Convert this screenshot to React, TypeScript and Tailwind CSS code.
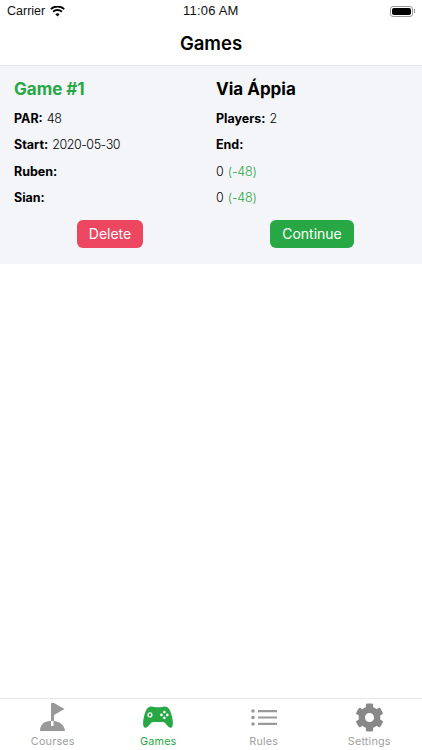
import React from "react";
import { FaCog } from "react-icons/fa";
import { IoLogoGameControllerB } from "react-icons/io";

const font = "font-['Inter','Liberation_Sans',sans-serif]";

function Row({ label, value }: { label: string; value?: string }) {
  return (
    <div className="h-[26.4px] flex items-center text-[12.5px] text-black">
      <span className="font-bold">{label}</span>
      {value && <span className="ml-1 font-light tracking-[-0.45px]">{value}</span>}
    </div>
  );
}

function Score() {
  return (
    <div className="h-[26.4px] flex items-center text-[12.5px] font-light text-black">
      <span>0</span>
      <span className="ml-1 text-[#28a745] tracking-[-0.2px]">(-48)</span>
    </div>
  );
}

function Flag() {
  return (
    <svg width="25" height="28" viewBox="0 0 25 28" aria-hidden="true">
      <path d="M11 0h3v18h-3z" fill="#999" />
      <path d="M14 0l10.500 6L14 12z" fill="#999" />
      <path d="M0 28c0-5 3-9 8-9.700 1-.2 2-.3 3-.3v5h2.500v-5c6.500.3 11 4.500 11.500 10z" fill="#999" />
    </svg>
  );
}

function ListIcon() {
  return (
    <svg width="26" height="17" viewBox="0 0 26 17" aria-hidden="true">
      <circle cx="2" cy="2" r="1.800" fill="#999" />
      <circle cx="2" cy="8.500" r="1.800" fill="#999" />
      <circle cx="2" cy="15" r="1.800" fill="#999" />
      <path d="M7 1h19v2.200H7zM7 7.400h19v2.200H7zM7 13.800h19V16H7z" fill="#999" />
    </svg>
  );
}

function Tab({ label, active, children }: { label: string; active?: boolean; children: React.ReactNode }) {
  return (
    <div className="flex flex-col items-center">
      <div className="h-[30px] flex items-center justify-center">{children}</div>
      <span className={`mt-[3px] text-[10.8px] leading-[14px] tracking-[0.2px] ${active ? "text-[#28a745]" : "text-[#a0a0a0]"}`}>{label}</span>
    </div>
  );
}

export default function App() {
  return (
    <div className={`${font} w-[422px] h-[750px] bg-white flex flex-col overflow-hidden`}>
      <div className="h-[22px] px-[7px] flex items-center justify-between relative text-[12.5px] text-[#111]">
        <div className="flex items-center gap-[5px] font-['Liberation_Sans',sans-serif]">
          <span>Carrier</span>
          <svg width="15" height="11" viewBox="0 0 16 12" aria-hidden="true">
            <path d="M8 11.500 5.700 8.900a3.400 3.400 0 0 1 4.600 0zM3.900 7 2.500 5.400a8.200 8.200 0 0 1 11 0L12.100 7a6 6 0 0 0-8.200 0zM1.500 4.200 0 2.600a11.800 11.800 0 0 1 16 0l-1.500 1.600a9.700 9.700 0 0 0-13 0z" fill="#000" />
          </svg>
        </div>
        <span className="absolute left-[183px] font-['Liberation_Sans',sans-serif] text-[13px] font-medium tracking-[0.2px]">11:06 AM</span>
        <div className="flex items-center">
          <div className="w-[23px] h-[11px] rounded-[3px] border border-[#999] p-[1px]">
            <div className="w-full h-full rounded-[2px] bg-black" />
          </div>
          <div className="w-[1px] h-[4px] bg-[#999] ml-[1px]" />
        </div>
      </div>

      <div className="h-[43px] flex items-center justify-center border-b border-[#e6e7eb] box-content">
        <h1 className="text-[18.5px] font-semibold text-black">Games</h1>
      </div>

      <div className="bg-[#f4f5f9] h-[198px] px-[14px] pt-[11px]">
        <div className="grid grid-cols-2 gap-x-[10px]">
          <div>
            <div className="h-[26px] flex items-center text-[17px] font-bold text-[#28a745]">Game #1</div>
            <div className="h-[3px]" />
            <Row label="PAR:" value="48" />
            <Row label="Start:" value="2020-05-30" />
            <Row label="Ruben:" />
            <Row label="Sian:" />
          </div>
          <div>
            <div className="h-[26px] flex items-center text-[17px] font-bold text-black">Via Áppia</div>
            <div className="h-[3px]" />
            <Row label="Players:" value="2" />
            <Row label="End:" />
            <Score />
            <Score />
          </div>
          <div className="flex justify-center mt-[8px]">
            <button className="w-[66px] h-[28px] rounded-[6px] bg-[#ec4660] text-white text-[14px] font-normal">Delete</button>
          </div>
          <div className="flex justify-center mt-[8px]">
            <button className="w-[84px] h-[28px] rounded-[6px] bg-[#28a745] text-white text-[14px] font-normal">Continue</button>
          </div>
        </div>
      </div>

      <div className="flex-1" />

      <div className="h-[48px] border-t border-[#e6e6e6] grid grid-cols-4 pt-[3px] box-content">
        <Tab label="Courses"><Flag /></Tab>
        <Tab label="Games" active><IoLogoGameControllerB size={34} color="#28a745" /></Tab>
        <Tab label="Rules"><ListIcon /></Tab>
        <Tab label="Settings"><FaCog size={29} color="#888888" /></Tab>
      </div>
    </div>
  );
}
